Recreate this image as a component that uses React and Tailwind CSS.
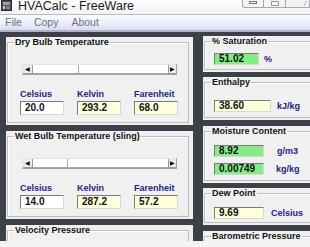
import React from "react";

const FONT = { fontFamily: '"Liberation Sans", Arial, sans-serif' };

function AppIcon() {
  return (
    <svg width="11" height="11" viewBox="0 0 11 11" className="shrink-0">
      <rect x="0.5" y="0.5" width="10" height="10" fill="#4a4d55" stroke="#2a2c31" />
      <rect x="2" y="2" width="7" height="3" fill="#9aa0aa" />
      <rect x="2" y="6" width="2" height="3" fill="#c9ccd2" />
      <rect x="5" y="6" width="4" height="3" fill="#7d828c" />
    </svg>
  );
}

function WinButtons() {
  return (
    <div className="flex h-[8px]">
      <div className="w-[22px] border border-t-0 border-[#a4a7ad] rounded-bl-[3px] bg-[#f4f4f5] flex justify-center pt-[1px]">
        <div className="w-[8px] h-[3px] border border-[#777]" />
      </div>
      <div className="w-[22px] border border-t-0 border-l-0 border-[#a4a7ad] bg-[#f4f4f5] flex justify-center pt-[1px]">
        <div className="w-[8px] h-[5px] border border-[#999]" />
      </div>
      <div className="w-[24px] border border-t-0 border-l-0 border-[#a4a7ad] bg-[#f4f4f5] flex justify-end pr-[3px] pt-[1px] text-[7px] leading-[6px] text-[#666]">
        ⁄
      </div>
    </div>
  );
}

function Group({ title, className = "", children }) {
  return (
    <div className={`bg-[#f0f0f0] pl-[1px] pr-[4px] pb-[2px] ${className}`}>
      <fieldset className="h-full min-w-0 border border-[#bdbdbd] shadow-[inset_1px_1px_0_#ffffff]">
        <legend className="ml-[6px] px-[1px] text-[9px] font-bold leading-[11px] text-[#111] whitespace-nowrap">
          {title}
        </legend>
        {children}
      </fieldset>
    </div>
  );
}

function Scroll({ pos }) {
  return (
    <div className="ml-[14px] mt-[16px] w-[155px] h-[11px] flex bg-white border-b border-r border-[#a0a0a0] border-t border-l border-t-[#e4e4e4] border-l-[#e4e4e4]">
      <div className="w-[10px] h-full bg-[#ececec] border-r border-b border-[#9a9a9a] flex items-center justify-center text-[6px] leading-none text-black">
        ◀
      </div>
      <div
        className="h-full bg-white border-r border-b border-[#a8a8a8]"
        style={{ width: pos }}
      />
      <div className="flex-1 h-full bg-white border-b border-[#a8a8a8]" />
      <div className="w-[8px] h-full bg-[#ececec] border-l border-b border-[#9a9a9a] flex items-center justify-center text-[6px] leading-none text-black">
        ▶
      </div>
    </div>
  );
}

function Box({ value, bg = "bg-white", w = "w-[44px]", h = "h-[14px]" }) {
  return (
    <div
      className={`${w} ${h} ${bg} border border-t-[#7a7a7a] border-l-[#7a7a7a] border-b-[#d8d8d8] border-r-[#d8d8d8] pl-[4px] flex items-center text-[10px] leading-none text-[#111] font-bold`}
    >
      {value}
    </div>
  );
}

function TempGroup({ title, pos, c, k, f }) {
  const cols = [
    ["Celsius", c, "bg-white"],
    ["Kelvin", k, "bg-[#fefedb]"],
    ["Farenheit", f, "bg-[#fefedb]"],
  ];
  return (
    <Group title={title} className="h-[88px] shrink-0">
      <Scroll pos={pos} />
      <div className="ml-[12px] mt-[14px] flex gap-[12px]">
        {cols.map(([label, val, bg]) => (
          <div key={label} className="w-[45px]">
            <div className="text-[9px] leading-[10px] font-bold text-[#1e1e82]">{label}</div>
            <div className="mt-[2px]">
              <Box value={val} bg={bg} />
            </div>
          </div>
        ))}
      </div>
    </Group>
  );
}

function Unit({ children, ml }) {
  return (
    <span className={`${ml} text-[9px] leading-none font-bold text-[#1e1e82] whitespace-nowrap`}>
      {children}
    </span>
  );
}

export default function App() {
  return (
    <div style={FONT} className="w-[310px] h-[247px] overflow-hidden bg-[#3c4048] flex flex-col">
      {/* title bar */}
      <div className="h-[14px] shrink-0 bg-gradient-to-b from-[#fdfdfe] to-[#f2f3f6] flex items-start justify-between pl-[1px]">
        <div className="flex items-start gap-[6px]">
          <AppIcon />
          <span className="text-[12.5px] leading-[13px] text-[#1a1a1a] whitespace-nowrap">HVACalc - FreeWare</span>
        </div>
        <WinButtons />
      </div>

      {/* menu bar */}
      <div className="h-[18px] shrink-0 border-t border-[#b9bcc4] bg-gradient-to-b from-[#fbfbfe] via-[#eef0fa] to-[#d9ddf0] border-b-[2px] border-b-[#aeb3c8] flex items-center text-[10.5px] leading-none text-[#6e6f7c]">
        <span className="ml-[5px]">File</span>
        <span className="ml-[12px]">Copy</span>
        <span className="ml-[13px]">About</span>
      </div>

      {/* body */}
      <div className="h-[209px] shrink-0 overflow-hidden flex gap-[10px] pl-[6px] pt-[4px]">
        <div className="w-[187px] shrink-0 flex flex-col gap-[6px] pt-[1px]">
          <TempGroup title="Dry Bulb Temperature" pos={46} c="20.0" k="293.2" f="68.0" />
          <TempGroup title="Wet Bulb Temperature (sling)" pos={35} c="14.0" k="287.2" f="57.2" />
          <Group title="Velocity Pressure" className="h-[60px] shrink-0" />
        </div>

        <div className="w-[115px] shrink-0 flex flex-col">
          <Group title="% Saturation" className="h-[36px] shrink-0">
            <div className="ml-[9px] mt-[6px] flex items-center">
              <Box value="51.02" bg="bg-[#86ec86]" w="w-[45px]" h="h-[12px]" />
              <Unit ml="ml-[5px]">%</Unit>
            </div>
          </Group>
          <Group title="Enthalpy" className="h-[43px] shrink-0 mt-[5px]">
            <div className="ml-[9px] mt-[12px] flex items-center">
              <Box value="38.60" bg="bg-[#fefedb]" w="w-[57px]" h="h-[12px]" />
              <Unit ml="ml-[6px]">kJ/kg</Unit>
            </div>
          </Group>
          <Group title="Moisture Content" className="h-[57px] shrink-0 mt-[6px]">
            <div className="ml-[9px] mt-[8px] flex items-center">
              <Box value="8.92" bg="bg-[#86ec86]" w="w-[50px]" h="h-[12px]" />
              <Unit ml="ml-[13px]">g/m3</Unit>
            </div>
            <div className="ml-[9px] mt-[6px] flex items-center">
              <Box value="0.00749" bg="bg-[#86ec86]" w="w-[50px]" h="h-[12px]" />
              <Unit ml="ml-[12px]">kg/kg</Unit>
            </div>
          </Group>
          <Group title="Dew Point" className="h-[37px] shrink-0 mt-[5px]">
            <div className="ml-[9px] mt-[8px] flex items-center">
              <Box value="9.69" bg="bg-[#fefedb]" w="w-[50px]" h="h-[12px]" />
              <Unit ml="ml-[7px]">Celsius</Unit>
            </div>
          </Group>
          <Group title="Barometric Pressure" className="h-[40px] shrink-0 mt-[6px]" />
        </div>
      </div>

      {/* bottom strip */}
      <div className="h-[6px] shrink-0 bg-[#f3f5f3]" />
    </div>
  );
}
